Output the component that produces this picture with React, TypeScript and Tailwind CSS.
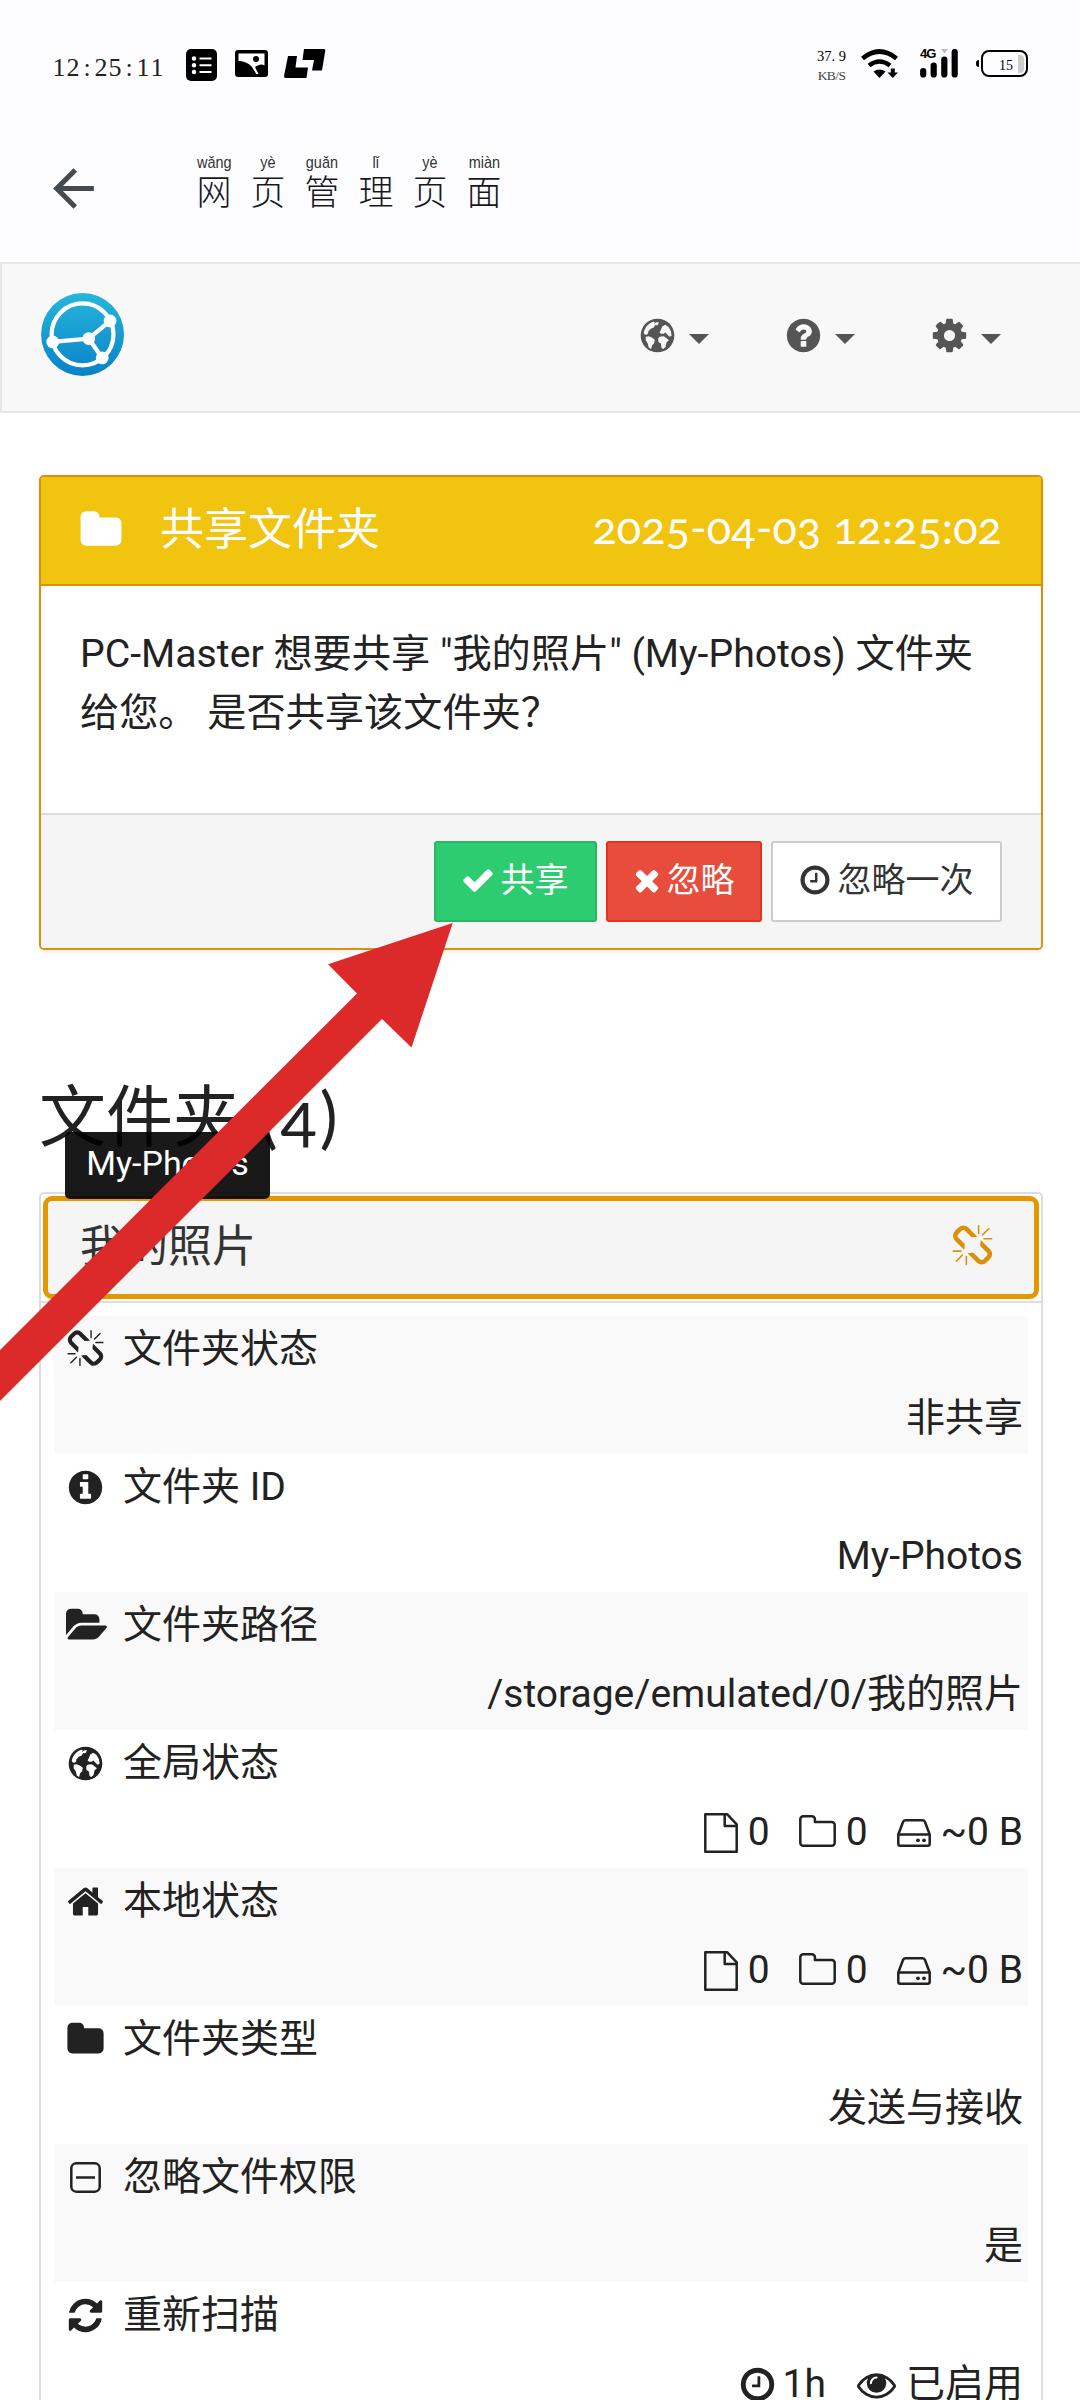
import type { ReactNode } from "react";

const paths = {
  check:
    "M1671 566q0 40-28 68l-724 724-136 136q-28 28-68 28t-68-28l-136-136-362-362q-28-28-28-68t28-68l136-136q28-28 68-28t68 28l294 295 656-657q28-28 68-28t68 28l136 136q28 28 28 68z",
  times:
    "M1490 1322q0 40-28 68l-136 136q-28 28-68 28t-68-28l-294-294-294 294q-28 28-68 28t-68-28l-136-136q-28-28-28-68t28-68l294-294-294-294q-28-28-28-68t28-68l136-136q28-28 68-28t68 28l294 294 294-294q28-28 68-28t68 28l136 136q28 28 28 68t-28 68l-294 294 294 294q28 28 28 68z",
  clock:
    "M1024 544v448q0 14-9 23t-23 9h-320q-14 0-23-9t-9-23v-64q0-14 9-23t23-9h224v-352q0-14 9-23t23-9h64q14 0 23 9t9 23zm416 352q0-148-73-273t-198-198-273-73-273 73-198 198-73 273 73 273 198 198 273 73 273-73 198-198 73-273zm224 0q0 209-103 385.5t-279.5 279.5-385.5 103-385.5-103-279.5-279.5-103-385.5 103-385.5 279.5-279.5 385.5-103 385.5 103 279.5 279.5 103 385.5z",
  home: "M1472 992v480q0 26-19 45t-45 19h-384v-384h-256v384h-384q-26 0-45-19t-19-45v-480q0-1 .5-3t.5-3l575-474 575 474q1 2 1 6zm223-69l-62 74q-8 9-21 11h-3q-13 0-21-7l-692-577-692 577q-12 8-24 7-13-2-21-11l-62-74q-8-10-7-23.5t11-21.5l719-599q32-26 76-26t76 26l244 204v-195q0-14 9-23t23-9h192q14 0 23 9t9 23v408l219 182q10 8 11 21.5t-7 23.5z",
  folder:
    "M1728 608v704q0 92-66 158t-158 66h-1216q-92 0-158-66t-66-158v-960q0-92 66-158t158-66h320q92 0 158 66t66 158v32h672q92 0 158 66t66 158z",
  folderOpen:
    "M1879 952q0 31-31 66l-336 396q-43 51-120.5 86.5t-143.5 35.5h-1088q-34 0-60.5-13t-26.5-43q0-31 31-66l336-396q43-51 120.5-86.5t143.5-35.5h1088q34 0 60.5 13t26.5 43zm-343-344v160h-832q-94 0-197 47.5t-164 119.5l-337 396-5 6q0-4-.5-12.5t-.5-12.5v-960q0-92 66-158t158-66h320q92 0 158 66t66 158v32h544q92 0 158 66t66 158z",
  question:
    "M1024 1376v-192q0-14-9-23t-23-9h-192q-14 0-23 9t-9 23v192q0 14 9 23t23 9h192q14 0 23-9t9-23zm256-672q0-88-55.5-163t-138.5-116-170-41q-243 0-371 213-15 24 8 42l132 100q7 6 19 6 16 0 25-12 53-68 86-92 34-24 86-24 48 0 85.5 26t37.5 59q0 38-20 61t-68 45q-63 28-115.5 86.5t-52.5 125.5v36q0 14 9 23t23 9h192q14 0 23-9t9-23q0-19 21.5-49.5t54.5-49.5q32-18 49-28.5t46-35 44.5-48 28-60.5 12.5-81zM1664 896q0 209-103 385.5t-279.5 279.5-385.5 103-385.5-103-279.5-279.5-103-385.5 103-385.5 279.5-279.5 385.5-103 385.5 103 279.5 279.5 103 385.5z",
  info: "M1152 1376v-160q0-14-9-23t-23-9h-96v-512q0-14-9-23t-23-9h-320q-14 0-23 9t-9 23v160q0 14 9 23t23 9h96v320h-96q-14 0-23 9t-9 23v160q0 14 9 23t23 9h448q14 0 23-9t9-23zm-128-896v-160q0-14-9-23t-23-9h-192q-14 0-23 9t-9 23v160q0 14 9 23t23 9h192q14 0 23-9t9-23zM1664 896q0 209-103 385.5t-279.5 279.5-385.5 103-385.5-103-279.5-279.5-103-385.5 103-385.5 279.5-279.5 385.5-103 385.5 103 279.5 279.5 103 385.5z",
  refresh:
    "M1639 1056q0 5-1 7-64 268-268 434.5t-478 166.5q-146 0-282.5-55t-243.5-157l-129 129q-19 19-45 19t-45-19-19-45v-448q0-26 19-45t45-19h448q26 0 45 19t19 45-19 45l-137 137q71 66 161 102t187 36q134 0 250-65t186-179q11-17 53-117 8-23 30-23h192q13 0 22.5 9.5t9.5 22.5zm25-800v448q0 26-19 45t-45 19h-448q-26 0-45-19t-19-45 19-45l138-138q-148-137-349-137-134 0-250 65t-186 179q-11 17-53 117-8 23-30 23h-199q-13 0-22.5-9.5t-9.5-22.5v-7q65-268 270-434.5t480-166.5q146 0 284 55.5t245 156.5l130-129q19-19 45-19t45 19 19 45z",
  cog: "M1152 896q0-106-75-181t-181-75-181 75-75 181 75 181 181 75 181-75 75-181zm512-109v222q0 12-8 23t-20 13l-185 28q-19 54-39 91 35 50 107 138 10 12 10 25t-9 23q-27 37-99 108t-94 71q-12 0-26-9l-138-108q-44 23-91 38-16 136-29 186-7 28-36 28h-222q-14 0-24.5-8.5t-11.5-21.5l-28-184q-49-16-90-37l-141 107q-10 9-25 9-14 0-25-11-126-114-165-168-7-10-7-23 0-12 8-23 15-21 51-66.5t54-70.5q-27-50-41-99l-183-27q-13-2-21-12.5t-8-23.5v-222q0-12 8-23t19-13l186-28q14-46 39-92-40-57-107-138-10-12-10-24 0-10 9-23 26-36 98.5-107.5t94.5-71.5q13 0 26 10l138 107q44-23 91-38 16-136 29-186 7-28 36-28h222q14 0 24.5 8.5t11.5 20.5l28 184q49 16 90 37l142-107q9-9 24-9 13 0 25 10 129 119 165 170 7 8 7 22 0 12-8 23-15 21-51 66.5t-54 70.5q26 50 41 98l183 28q13 2 21 12.5t8 23.5z",
  unlink:
    "M503 1271l-256 256q-10 9-23 9-12 0-23-9-9-10-9-23t9-23l256-256q10-9 23-9t23 9q9 10 9 23t-9 23zm169 41v320q0 14-9 23t-23 9-23-9-9-23v-320q0-14 9-23t23-9 23 9 9 23zm-224-224q0 14-9 23t-23 9h-320q-14 0-23-9t-9-23 9-23 23-9h320q14 0 23 9t9 23zm1264 128q0 120-85 203l-147 146q-83 83-203 83-121 0-204-85l-334-335q-21-21-42-56l239-18 273 274q28 28 68 28.5t68-27.5l147-146q28-28 28-67 0-40-28-68l-274-275 18-239q35 21 56 42l336 336q84 86 84 204zm-617-724l-239 18-273-274q-28-28-68-28-39 0-68 27l-147 146q-28 28-28 67 0 40 28 68l274 274-18 240q-35-21-56-42l-336-336q-84-86-84-204 0-120 85-203l147-146q83-83 203-83 121 0 204 85l334 335q21 21 42 56zm633 84q0 14-9 23t-23 9h-320q-14 0-23-9t-9-23 9-23 23-9h320q14 0 23 9t9 23zm-544-544v320q0 14-9 23t-23 9-23-9-9-23v-320q0-14 9-23t23-9 23 9 9 23zm407 151l-256 256q-11 9-23 9t-23-9q-9-10-9-23t9-23l256-256q10-9 23-9t23 9q9 10 9 23t-9 23z",
  eye: "M1664 960q-152-236-381-353 61 104 61 225 0 185-131.5 316.5t-316.5 131.5-316.5-131.5-131.5-316.5q0-121 61-225-229 117-381 353 133 205 333.5 326.5t434.5 121.5 434.5-121.5 333.5-326.5zm-720-384q0-20-14-34t-34-14q-125 0-214.5 89.5t-89.5 214.5q0 20 14 34t34 14 34-14 14-34q0-86 61-147t147-61q20 0 34-14t14-34zm848 384q0 34-20 69-140 230-376.5 368.5t-499.5 138.5-499.5-139-376.5-368q-20-35-20-69t20-69q140-229 376.5-368t499.5-139 499.5 139 376.5 368q20 35 20 69z",
};

function Icon({ name, className = "size-[39px]" }: { name: keyof typeof paths; className?: string }) {
  return (
    <svg viewBox="0 0 1792 1792" fill="currentColor" className={`shrink-0 overflow-visible ${className}`}>
      <path d={paths[name]} />
    </svg>
  );
}

function Globe({ land = "fill-white" }: { land?: string }) {
  return (
    <svg viewBox="-8 -8 116 116" fill="currentColor" className="size-[39px] shrink-0">
      <circle cx="50" cy="50" r="50" />
      <g className={land}>
        <path d="M9 42C12 27 22 14 37 9l5 1-3 6 6-5 9-1-2 7-6 3-3-2-4 8-9 4-7 7-1 7-4 4-6-1z" />
        <path d="M15 54l9-2 9 4 9 7-2 10-6 6-3 11-7-4-3-12-6-10z" />
        <path d="M56 41l4-7 4-11 9-5 10 7 7 12 2 14-6 3-7-7-6-6-5 4-7 0z" />
        <path d="M52 60l4-6 12-2 6 4 10 8-7 6-3 14-7 6-5-3-2-13-7-5z" />
      </g>
    </svg>
  );
}

function FileOutline() {
  return (
    <svg viewBox="0 0 34 40" className="h-10 w-[34px]" fill="none" stroke="currentColor" strokeWidth="2.5" strokeLinejoin="round">
      <path d="M1.3 1.3h22l9.4 10v27.4H1.3z" />
      <path d="M20.7 1.3V13h12" />
    </svg>
  );
}

function FolderOutline() {
  return (
    <svg viewBox="0 0 37 32" className="h-8 w-[37px]" fill="none" stroke="currentColor" strokeWidth="2.5" strokeLinejoin="round">
      <path d="M1.3 4.3a3 3 0 0 1 3-3h8.6a3 3 0 0 1 3 3v2.6h16.8a3 3 0 0 1 3 3v17.8a3 3 0 0 1-3 3H4.3a3 3 0 0 1-3-3z" />
    </svg>
  );
}

function DiskOutline() {
  return (
    <svg viewBox="0 0 34 28" className="h-7 w-[34px]" fill="none" stroke="currentColor" strokeWidth="2.5" strokeLinejoin="round">
      <path d="M1.3 15.5 6 3a2.6 2.6 0 0 1 2.5-1.7h17A2.6 2.6 0 0 1 28 3l4.7 12.5v9.2a2 2 0 0 1-2 2H3.3a2 2 0 0 1-2-2zM1.3 15.5h31.4" />
      <circle cx="21" cy="21.3" r="1.9" fill="currentColor" stroke="none" />
      <circle cx="27" cy="21.3" r="1.9" fill="currentColor" stroke="none" />
    </svg>
  );
}

function MinusSquare() {
  return (
    <svg viewBox="0 0 31 31" className="size-[31px]" fill="none" stroke="currentColor" strokeWidth="2.5">
      <rect x="1.3" y="1.3" width="28.4" height="28.4" rx="5" />
      <path d="M6 15.5h19" />
    </svg>
  );
}

function SyncthingLogo() {
  return (
    <svg viewBox="0 0 117.3 117.3" className="size-[83px]">
      <defs>
        <linearGradient id="logo" x1="0" y1="1" x2="0" y2="0">
          <stop offset="0" stopColor="#0882C8" />
          <stop offset="1" stopColor="#26B6DB" />
        </linearGradient>
      </defs>
      <circle cx="58.7" cy="58.6" r="58.6" fill="url(#logo)" />
      <circle cx="58.7" cy="58.5" r="43.7" fill="none" stroke="#fff" strokeWidth="6" />
      <path d="M97.6 39.4 67.5 64.4M86.5 91.8 67.5 64.4M16.6 69.1l50.9-4.7" stroke="#fff" strokeWidth="6" />
      <g fill="#fff">
        <circle cx="97.6" cy="39.4" r="9" />
        <circle cx="86.5" cy="91.8" r="9" />
        <circle cx="67.5" cy="64.4" r="9" />
        <circle cx="16.6" cy="69.1" r="9" />
      </g>
    </svg>
  );
}

const title = [
  ["wǎng", "网"],
  ["yè", "页"],
  ["guǎn", "管"],
  ["lǐ", "理"],
  ["yè", "页"],
  ["miàn", "面"],
];

function StatusBar() {
  return (
    <div className="flex h-[126px] items-start justify-between px-[52px] pt-[49px] text-black">
      <div className="flex items-start">
        <div className="mt-1 flex font-['Liberation_Serif',serif] text-[26px] leading-[30px] text-[#222]">
          {"12:25:11".split("").map((c, i) => (
            <span key={i} className="w-[14px] text-center">
              {c}
            </span>
          ))}
        </div>
        <svg viewBox="0 0 31 32" className="ml-[22px] h-8 w-[31px]">
          <rect width="31" height="32" rx="5" />
          <g fill="#fff">
            <circle cx="8" cy="9.5" r="2.2" />
            <circle cx="8" cy="16.3" r="2.2" />
            <circle cx="8" cy="23" r="2.2" />
          </g>
          <path d="M13.5 9.5h12M13.5 16.3h12M13.5 23h12" stroke="#fff" strokeWidth="2" />
        </svg>
        <svg viewBox="0 0 33 27" className="mt-px ml-[18px] h-[27px] w-[33px]">
          <rect width="33" height="27" rx="3" />
          <path d="M3.5 3.5h26v12C27 13.5 23.5 14.5 20 17l3.5 7h-2.2l-4.3-7C14 13.5 9 11 3.5 11z" fill="#fff" />
          <circle cx="21" cy="9" r="3" />
        </svg>
        <svg viewBox="0 0 42 29" className="ml-4 h-[29px] w-[42px]">
          <path d="M4 7h9l-1.5 11.500H24L22.500 29H1.500Q0 29 0 27zM20 0h20q1.500 0 1.300 1.500L38 21.500H28L30 11H18.500z" />
        </svg>
      </div>
      <div className="flex items-start">
        <div className="w-[29px] text-center font-['Liberation_Serif',serif] text-[14.5px]">
          <div className="h-[18px] leading-[15px]">37. 9</div>
          <div className="text-[13.5px] leading-[18px] tracking-[-0.6px] text-[#444]">KB/S</div>
        </div>
        <svg viewBox="0 0 38 29" className="ml-[15px] h-[29px] w-[38px]" fill="none" stroke="#000" strokeWidth="4.6">
          <path d="M1.5 9.5Q18.5-4.5 35.5 9.5M8 16.5q10.5-8 21 0" />
          <path d="M12.5 22.5q6-4 12 0l-6 6.5z" fill="#000" stroke="none" />
          <path d="M31.8 19.5V25" strokeWidth="4" />
          <path d="M26.5 23.5h10.5l-5.2 5.5z" fill="#000" stroke="none" />
        </svg>
        <div className="relative ml-[21px] h-[29px] w-[38px]">
          <svg viewBox="0 0 38 29" className="h-[29px] w-[38px]" stroke="#000" strokeWidth="6.2" strokeLinecap="round">
            <path d="M3.2 22v3.5M13.7 16.5v9M24.3 10.5v15M34.7 3v22.5" />
            <path d="M21 0h7l-3.5 4.5z" fill="#bbb" stroke="none" />
          </svg>
          <span className="absolute -top-0.5 left-0 font-['Liberation_Sans',sans-serif] text-[13px] leading-[14px] font-bold tracking-[-1px]">4G</span>
        </div>
        <div className="ml-[18px] flex items-center pt-px">
          <div className="mr-0.5 h-[7px] w-[3px] rounded-l-full bg-black" />
          <div className="flex h-[27px] w-[47px] items-end justify-end rounded-lg border-[2.5px] border-black p-0.5">
            <span className="mr-[5px] font-['Liberation_Serif',serif] text-[14px] leading-[14px]">15</span>
            <span className="h-[18px] w-1.5 rounded-r bg-[#ccc]" />
          </div>
        </div>
      </div>
    </div>
  );
}

function AppBar() {
  return (
    <div className="flex h-[136px] pl-[43px]">
      <svg viewBox="0 0 24 24" className="mt-8 size-[61px]" fill="#444a50">
        <path d="M20 11H7.83l5.59-5.590L12 4l-8 8 8 8 1.410-1.410L7.830 13H20v-2z" />
      </svg>
      <div className="ml-[83px] flex pt-[27px] text-[#15191d]">
        {title.map(([pinyin, char], i) => (
          <div key={i} className="flex w-[54px] flex-col items-center">
            <span className="scale-x-[.85] font-['Liberation_Sans',sans-serif] text-[17px] leading-[20px] text-[#333]">{pinyin}</span>
            <span className="mt-px text-[35px] leading-[40px] font-light">{char}</span>
          </div>
        ))}
      </div>
    </div>
  );
}

function Caret() {
  return (
    <svg viewBox="0 0 20 10" className="mt-[7px] ml-3 h-2.5 w-5" fill="currentColor">
      <path d="M0 0h20L10 10z" />
    </svg>
  );
}

function Navbar() {
  return (
    <nav className="flex h-[151px] items-center justify-between border-y-2 border-l-2 border-[#e7e7e7] bg-[#f8f8f8] pr-[79px] pl-[39px]">
      <div className="-mt-[7px]">
        <SyncthingLogo />
      </div>
      <div className="-mt-[5px] flex gap-[75px] text-[#555]">
        <div className="flex items-center">
          <Globe land="fill-[#f8f8f8]" />
          <Caret />
        </div>
        <div className="flex items-center">
          <Icon name="question" />
          <Caret />
        </div>
        <div className="flex items-center">
          <Icon name="cog" />
          <Caret />
        </div>
      </div>
    </nav>
  );
}

function SharePanel() {
  return (
    <section className="mt-[62px] mr-[37px] ml-[39px] flex h-[475px] flex-col overflow-hidden rounded-[5px] border-2 border-[#db8f0c] shadow-[0_3px_3px_rgba(0,0,0,0.05)]">
      <header className="flex h-[109px] items-center border-b-2 border-[#db8f0c] bg-[#f1c40f] pr-[39px] pb-0.5 pl-[38px] text-[44px] text-white">
        <Icon name="folder" className="size-[44px]" />
        <span className="ml-[37px]">共享文件夹</span>
        <span className="mb-1 ml-auto font-['Lato',sans-serif] text-[45px] tracking-[0.1px] oldstyle-nums">2025-04-03 12:25:02</span>
      </header>
      <div className="flex-1 bg-white px-[39px] pt-[39px] text-[39.2px] leading-[59px]">
        PC-Master 想要共享 "我的照片" (My-Photos) 文件夹
        <br />
        给您。 是否共享该文件夹？
      </div>
      <footer className="flex h-[135px] gap-[9px] border-t-2 border-[#ddd] bg-[#f5f5f5] pt-[26px] pr-[39px] text-[34px]">
        <button className="ml-auto flex h-[81px] w-[163px] items-center justify-center gap-1.5 rounded-[3px] border-2 border-[#29b765] bg-[#2ecc71] pr-0.5 pb-[3px] text-white">
          <Icon name="check" className="size-[34px]" />
          共享
        </button>
        <button className="flex h-[81px] w-[156px] items-center justify-center gap-[3px] rounded-[3px] border-2 border-[#e6321f] bg-[#e74c3c] pr-1 pb-[3px] text-white">
          <Icon name="times" className="size-[34px]" />
          忽略
        </button>
        <button className="flex h-[81px] w-[231px] items-center justify-center gap-1.5 rounded-[3px] border-2 border-[#ccc] bg-white pr-0.5 pb-[3px] text-[#333]">
          <Icon name="clock" className="size-[34px]" />
          忽略一次
        </button>
      </footer>
    </section>
  );
}

function Stats() {
  return (
    <>
      <FileOutline />
      <span className="ml-2.5">0</span>
      <span className="ml-[29px] -mt-[3px]">
        <FolderOutline />
      </span>
      <span className="ml-2.5">0</span>
      <span className="ml-[29px]">
        <DiskOutline />
      </span>
      <span className="ml-2.5">~0 B</span>
    </>
  );
}

const rows: { icon: ReactNode; label: string; value: ReactNode }[] = [
  { icon: <Icon name="unlink" />, label: "文件夹状态", value: "非共享" },
  { icon: <Icon name="info" />, label: "文件夹 ID", value: "My-Photos" },
  { icon: <Icon name="folderOpen" />, label: "文件夹路径", value: "/storage/emulated/0/我的照片" },
  { icon: <Globe />, label: "全局状态", value: <Stats /> },
  { icon: <Icon name="home" />, label: "本地状态", value: <Stats /> },
  { icon: <Icon name="folder" />, label: "文件夹类型", value: "发送与接收" },
  { icon: <MinusSquare />, label: "忽略文件权限", value: "是" },
  {
    icon: <Icon name="refresh" />,
    label: "重新扫描",
    value: (
      <>
        <Icon name="clock" />
        <span className="ml-1.5">1h</span>
        <Icon name="eye" className="ml-[31px] size-[39px]" />
        <span className="ml-2.5">已启用</span>
      </>
    ),
  },
];

function FolderPanel() {
  return (
    <section className="mr-[37px] ml-[39px] h-[1300px] rounded-[5px] border-2 border-[#ddd] bg-white">
      <div className="h-[109px] border-b-2 border-[#ddd] p-[2px]">
        <button className="flex h-[103px] w-full items-center justify-between rounded-[9px] border-[5px] border-[#e59700] bg-[#f5f5f5] pr-10 pb-0.5 pl-8 text-[44px] text-[#333]">
          我的照片
          <Icon name="unlink" className="size-[43px] text-[#db8f0c]" />
        </button>
      </div>
      <div className="pt-[13px] pr-[13px] pl-[13px]">
        {rows.map((row) => (
          <div key={row.label} className="h-[138px] pr-[5px] pl-1.5 odd:bg-[#f9f9f9]">
            <div className="flex h-[67px] items-center">
              <span className="flex w-[50px] justify-center">{row.icon}</span>
              <span className="ml-[13px]">{row.label}</span>
            </div>
            <div className="flex h-[71px] items-center justify-end">{row.value}</div>
          </div>
        ))}
      </div>
    </section>
  );
}

export default function App() {
  return (
    <div className="relative h-[2400px] w-[1080px] overflow-hidden bg-white font-['Roboto','Noto_Sans_CJK_SC',sans-serif] text-[39px] text-[#222]">
      <div className="bg-[#fdfdff]">
        <StatusBar />
        <AppBar />
      </div>
      <Navbar />
      <SharePanel />

      <div className="relative">
        <h3 className="mt-[120px] ml-[39px] h-[122px] text-[67px] leading-[90px]">
          文件夹 <span className="ml-[3px] font-['Lato',sans-serif] tracking-[3px] oldstyle-nums">(4)</span>
        </h3>
        <FolderPanel />
        <div className="absolute top-[62px] left-[65px] flex h-[67px] w-[205px] items-center justify-center rounded-[5px] bg-black/90 pb-1 text-[34px] text-white">
          My-Photos
        </div>
      </div>

      {/* Pointer to the share button */}
      <svg viewBox="0 0 460 490" className="absolute top-[920px] left-0 h-[490px] w-[460px]" fill="#dc2a2b">
        <path d="M452.7 3 328 44.3 357 73.5 0 430v51L382 99l29.500 28.500z" />
      </svg>
    </div>
  );
}
